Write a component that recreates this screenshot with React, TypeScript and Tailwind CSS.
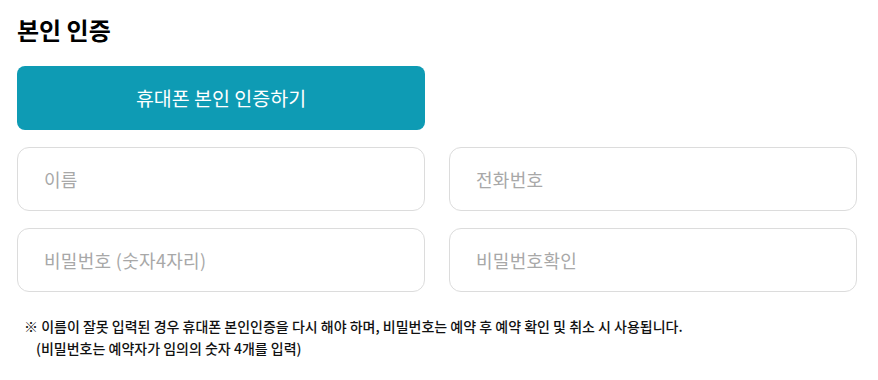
export default function App() {
  const font = { fontFamily: '"Noto Sans CJK KR", "Noto Sans", sans-serif' };
  const fields = ["이름", "전화번호", "비밀번호 (숫자4자리)", "비밀번호확인"];

  return (
    <div className="w-[878px] h-[380px] bg-white px-[17px] pt-[14px]" style={font}>
      <h2 className="text-[24px] font-bold leading-[32px] text-black">본인 인증</h2>

      <button className="mt-[20px] w-[408px] h-[64px] rounded-[8px] bg-[#0e9bb4] text-white text-[19.5px]">
        휴대폰 본인 인증하기
      </button>

      <div className="mt-[17px] grid grid-cols-[408px_408px] gap-x-[24px] gap-y-[17px]">
        {fields.map((f) => (
          <input
            key={f}
            type="text"
            placeholder={f}
            className="h-[64px] rounded-[12px] border border-[#dcdcdc] px-[26px] text-[18px] tracking-[0.3px] placeholder:text-[#a8a8a8] outline-none"
          />
        ))}
      </div>

      <div className="mt-[23px] pl-[7px] text-[14px] leading-[22px] font-medium text-[#111]">
        <p>※ 이름이 잘못 입력된 경우 휴대폰 본인인증을 다시 해야 하며, 비밀번호는 예약 후 예약 확인 및 취소 시 사용됩니다.</p>
        <p className="pl-[12px]">(비밀번호는 예약자가 임의의 숫자 4개를 입력)</p>
      </div>
    </div>
  );
}
